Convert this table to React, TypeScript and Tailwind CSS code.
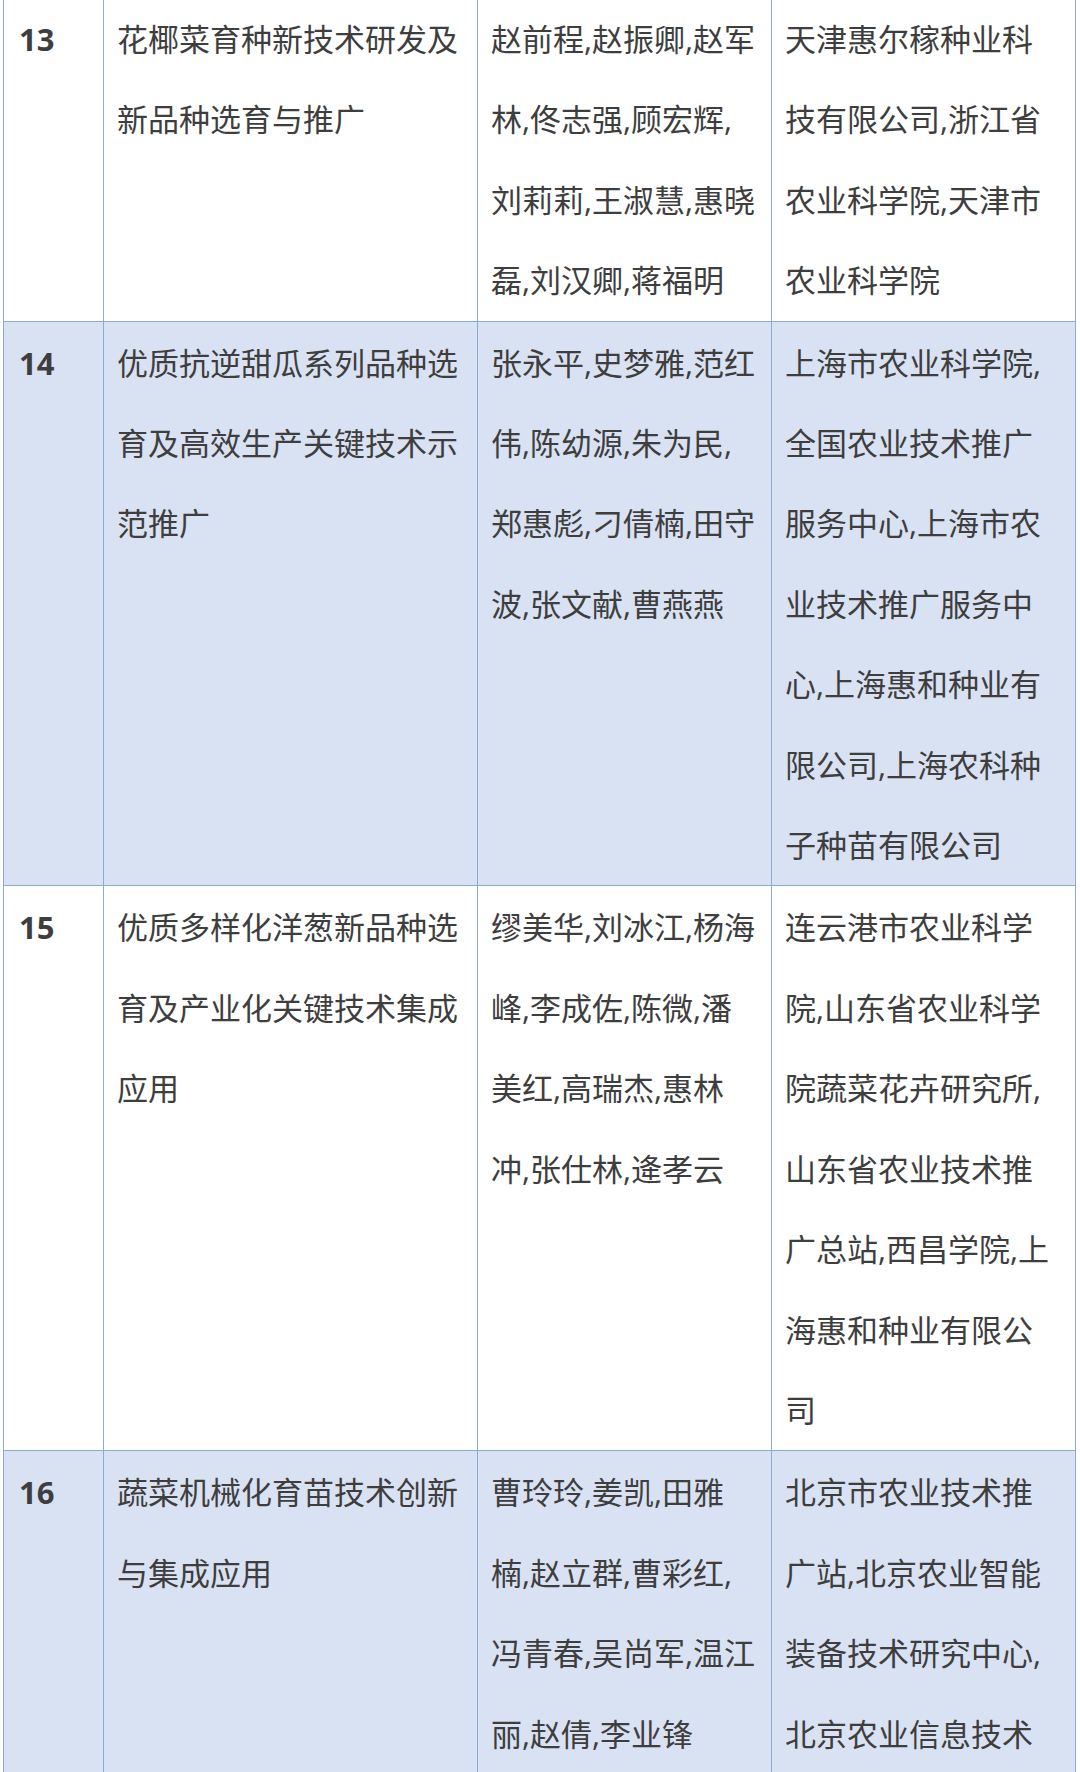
const rows = [
  {
    no: "13",
    name: ["花椰菜育种新技术研发及", "新品种选育与推广"],
    people: ["赵前程,赵振卿,赵军", "林,佟志强,顾宏辉,", "刘莉莉,王淑慧,惠晓", "磊,刘汉卿,蒋福明"],
    units: ["天津惠尔稼种业科", "技有限公司,浙江省", "农业科学院,天津市", "农业科学院"],
  },
  {
    no: "14",
    name: ["优质抗逆甜瓜系列品种选", "育及高效生产关键技术示", "范推广"],
    people: ["张永平,史梦雅,范红", "伟,陈幼源,朱为民,", "郑惠彪,刁倩楠,田守", "波,张文献,曹燕燕"],
    units: ["上海市农业科学院,", "全国农业技术推广", "服务中心,上海市农", "业技术推广服务中", "心,上海惠和种业有", "限公司,上海农科种", "子种苗有限公司"],
  },
  {
    no: "15",
    name: ["优质多样化洋葱新品种选", "育及产业化关键技术集成", "应用"],
    people: ["缪美华,刘冰江,杨海", "峰,李成佐,陈微,潘", "美红,高瑞杰,惠林", "冲,张仕林,逄孝云"],
    units: ["连云港市农业科学", "院,山东省农业科学", "院蔬菜花卉研究所,", "山东省农业技术推", "广总站,西昌学院,上", "海惠和种业有限公", "司"],
  },
  {
    no: "16",
    name: ["蔬菜机械化育苗技术创新", "与集成应用"],
    people: ["曹玲玲,姜凯,田雅", "楠,赵立群,曹彩红,", "冯青春,吴尚军,温江", "丽,赵倩,李业锋"],
    units: ["北京市农业技术推", "广站,北京农业智能", "装备技术研究中心,", "北京农业信息技术", "研究中心"],
  },
];

function Lines({ lines }: { lines: string[] }) {
  return (
    <>
      {lines.map((l, i) => (
        <div key={i} className="whitespace-nowrap">
          {l}
        </div>
      ))}
    </>
  );
}

export default function App() {
  return (
    <div className="w-[1080px] h-[1772px] overflow-hidden bg-white font-['Open_Sans','Noto_Sans_CJK_SC',sans-serif] text-[31px] leading-[80.4px] text-[#3e3e3e]">
      <div className="ml-[3px] mt-[-3px] w-[1073px] border-l border-t border-[#8eaadb]">
        {rows.map((r, i) => (
          <div
            key={r.no}
            className={`grid grid-cols-[100px_374px_294px_304px] border-b border-[#8eaadb] ${i % 2 === 1 ? "bg-[#d9e2f3]" : "bg-white"}`}
          >
            {/* 序号 */}
            <div className="border-r border-[#8eaadb] pl-[15px] pt-px font-bold">{r.no}</div>
            {/* 项目名称 */}
            <div className="border-r border-[#8eaadb] pl-[13px] pt-px">
              <Lines lines={r.name} />
            </div>
            {/* 主要完成人 */}
            <div className="border-r border-[#8eaadb] pl-[13px] pt-px">
              <Lines lines={r.people} />
            </div>
            {/* 主要完成单位 */}
            <div className="border-r border-[#8eaadb] pl-[13px] pt-px">
              <Lines lines={r.units} />
            </div>
          </div>
        ))}
      </div>
    </div>
  );
}
